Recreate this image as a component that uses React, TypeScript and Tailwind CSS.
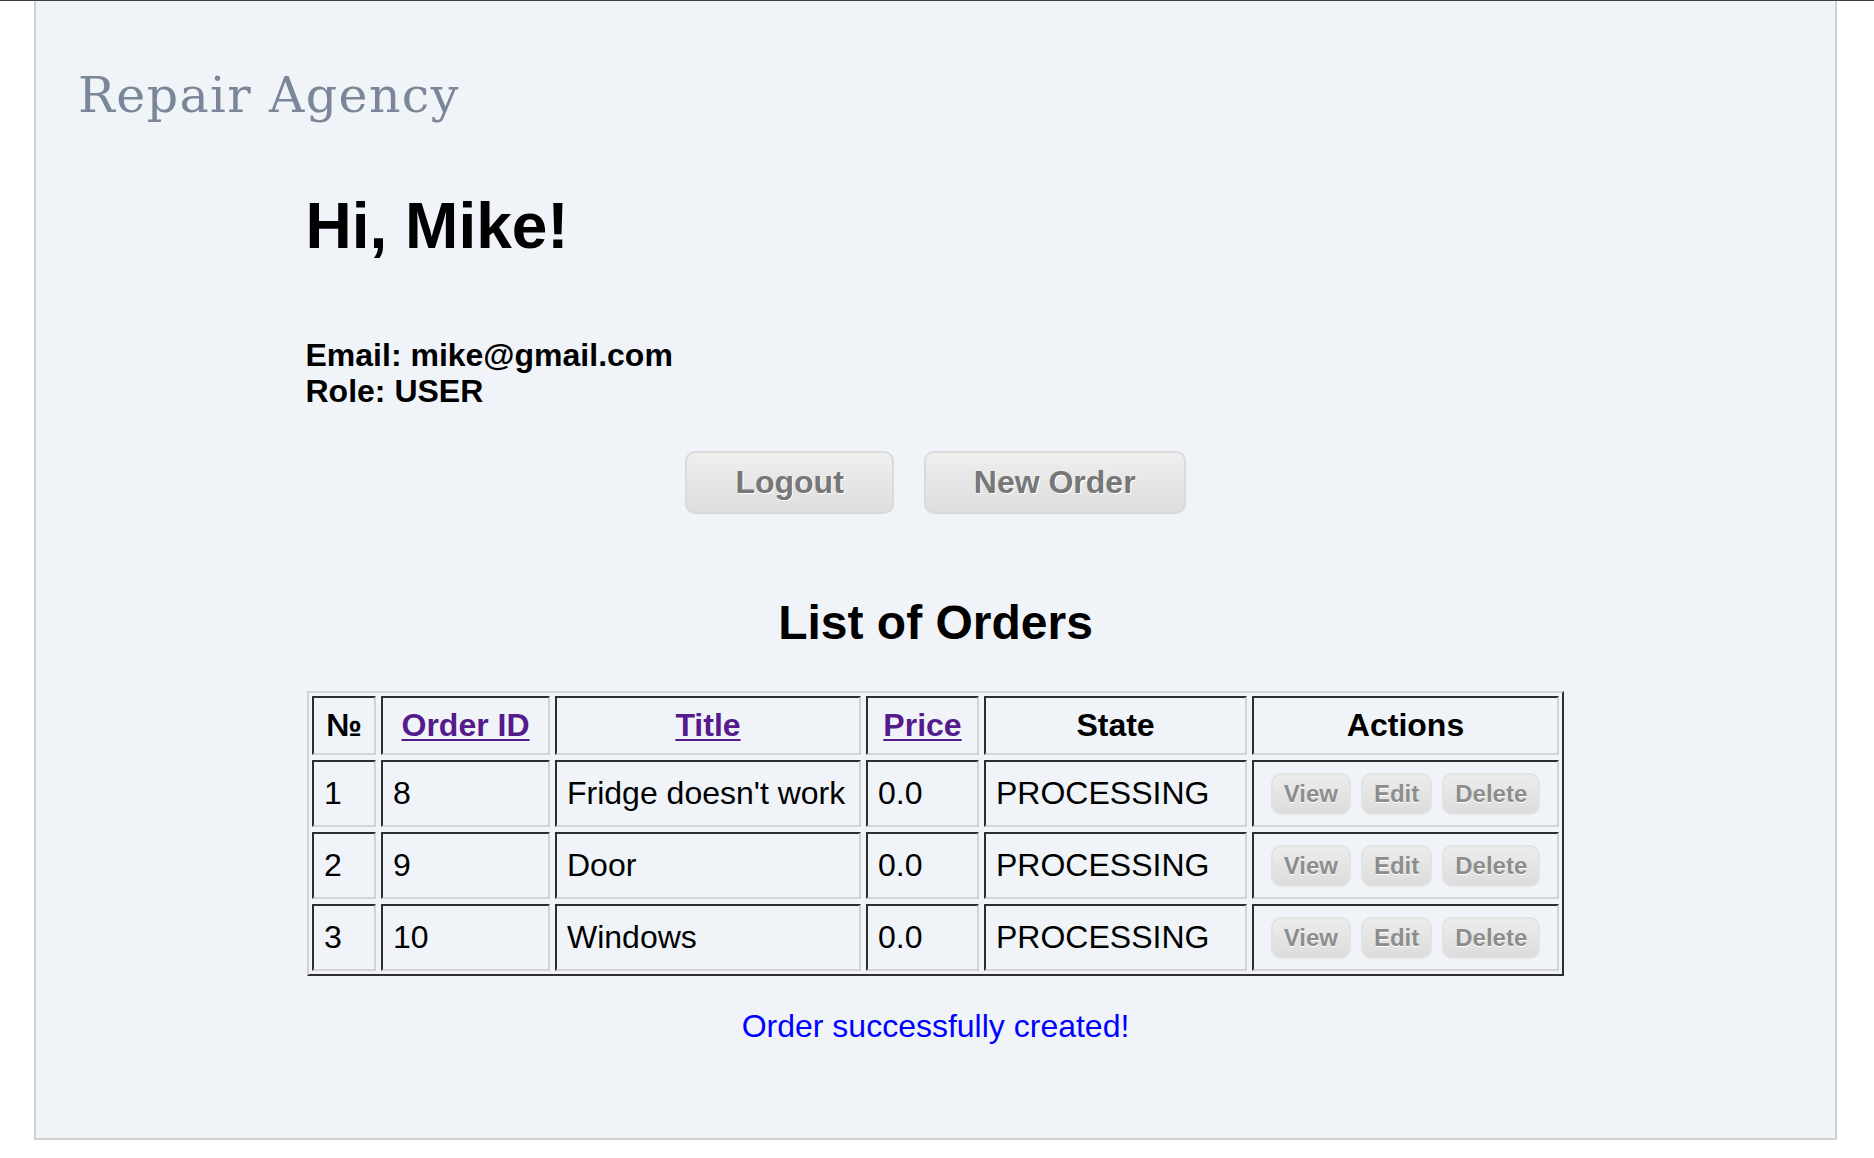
import React from "react";

const rows = [
  { n: 1, id: 8, title: "Fridge doesn't work", price: "0.0", state: "PROCESSING" },
  { n: 2, id: 9, title: "Door", price: "0.0", state: "PROCESSING" },
  { n: 3, id: 10, title: "Windows", price: "0.0", state: "PROCESSING" },
];

const cellBase =
  "border-2 border-t-[#2e2e2e] border-l-[#2e2e2e] border-b-[#d3d3d3] border-r-[#d3d3d3] flex items-center";

function HeadCell({ children, link }: { children: React.ReactNode; link?: boolean }) {
  return (
    <div className={`${cellBase} justify-center font-bold leading-[37px]`}>
      {link ? (
        <a href="#" className="text-[#551a8b] underline decoration-2 underline-offset-[3px]">
          {children}
        </a>
      ) : (
        <span>{children}</span>
      )}
    </div>
  );
}

function BodyCell({ children }: { children: React.ReactNode }) {
  return <div className={`${cellBase} pl-[10px] leading-[37px] whitespace-nowrap`}>{children}</div>;
}

function SmallButton({ label }: { label: string }) {
  return (
    <button className="h-[42px] px-[11px] rounded-[10px] border-2 border-[#e3e3e3] bg-linear-to-b from-[#ededed] to-[#dcdcdc] text-[24px] leading-[27px] font-bold text-[#8d8d8d] [text-shadow:0_1px_0_#ffffff]">
      {label}
    </button>
  );
}

function BigButton({ label }: { label: string }) {
  return (
    <button className="py-[11px] px-[48px] rounded-[10px] border-2 border-[#dadada] bg-linear-to-b from-[#efefef] to-[#dedede] text-[32px] leading-[37px] font-bold text-[#777777] [text-shadow:1px_1px_0_#ffffff]">
      {label}
    </button>
  );
}

export default function App() {
  return (
    <div className="w-[1874px] h-[1158px] bg-white font-['Liberation_Sans',Arial,sans-serif] text-black overflow-hidden">
      <div className="h-[1px] bg-[#3f3f3f]" />
      <div className="ml-[34px] w-[1803px] h-[1139px] border-x-2 border-b-2 border-[#d1d1d1] bg-[#f0f4f9]">
        <div className="pl-[42px] pt-[70px] font-['DejaVu_Serif',serif] text-[49px] leading-[49px] tracking-[1.4px] text-[#7b8799]">
          Repair Agency
        </div>

        <div className="w-[1260px] mx-auto">
          <h1 className="mt-[74px] text-[64px] leading-[64px] font-bold">Hi, Mike!</h1>

          <div className="mt-[79px] text-[32px] leading-[36px] font-bold">
            <div>Email: mike@gmail.com</div>
            <div>Role: USER</div>
          </div>

          <div className="mt-[42px] flex justify-center gap-[30px]">
            <BigButton label="Logout" />
            <BigButton label="New Order" />
          </div>

          <h2 className="mt-[85px] text-center text-[48px] leading-[48px] font-bold">List of Orders</h2>

          <div className="mt-[44px] mx-auto w-[1257px] border-2 border-t-[#d3d3d3] border-l-[#d3d3d3] border-b-[#2e2e2e] border-r-[#2e2e2e] p-[3px]">
            <div className="grid grid-cols-[64px_169px_306px_113px_263px_307px] grid-rows-[59px_67px_67px_67px] gap-[5px] text-[32px]">
              <HeadCell>№</HeadCell>
              <HeadCell link>Order ID</HeadCell>
              <HeadCell link>Title</HeadCell>
              <HeadCell link>Price</HeadCell>
              <HeadCell>State</HeadCell>
              <HeadCell>Actions</HeadCell>
              {rows.map((r) => (
                <React.Fragment key={r.n}>
                  <BodyCell>{r.n}</BodyCell>
                  <BodyCell>{r.id}</BodyCell>
                  <BodyCell>{r.title}</BodyCell>
                  <BodyCell>{r.price}</BodyCell>
                  <BodyCell>{r.state}</BodyCell>
                  <div className={`${cellBase} justify-center gap-[10px]`}>
                    <SmallButton label="View" />
                    <SmallButton label="Edit" />
                    <SmallButton label="Delete" />
                  </div>
                </React.Fragment>
              ))}
            </div>
          </div>

          <p className="mt-[32px] text-center text-[32px] leading-[37px] text-[#0000ff]">
            Order successfully created!
          </p>
        </div>
      </div>
    </div>
  );
}
